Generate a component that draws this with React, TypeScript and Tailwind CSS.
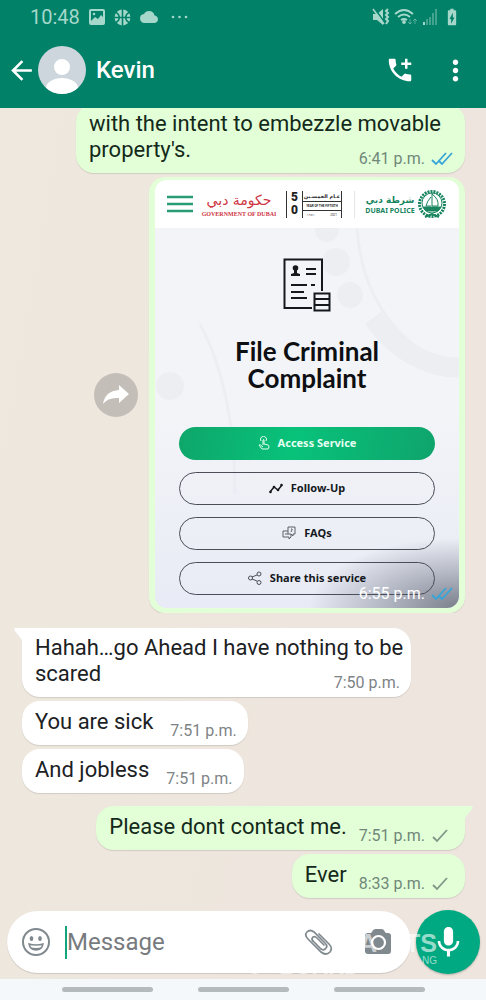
import type { ReactNode } from 'react'
import {
  MdAddIcCall,
  MdArrowBack,
  MdBatteryChargingFull,
  MdCloud,
  MdMic,
  MdMoreVert,
  MdSportsBasketball,
} from 'react-icons/md'

function StatusBar() {
  return (
    <div className="flex h-[34px] items-center justify-between pr-6 pl-[30px] text-[#a5d8cb]">
      <div className="flex items-center">
        <span className="w-[50px] text-[20px] leading-6">10:48</span>
        <svg className="ml-2 h-[18px] w-[18px]" viewBox="0 0 18 18" fill="none" stroke="currentColor" strokeWidth="2">
          <rect x="2" y="2" width="14" height="14" rx="1" />
          <path d="M3 13l4-4 3 2 3-4 3 3v6H3z" fill="currentColor" stroke="none" />
          <circle cx="6" cy="6" r="1.3" fill="currentColor" stroke="none" />
        </svg>
        <MdSportsBasketball className="ml-[7px]" size={19} />
        <MdCloud className="ml-2" size={18} />
        <svg className="ml-3 h-1 w-[18px]" viewBox="0 0 18 4" fill="currentColor">
          <circle cx="3" cy="2" r="1.3" />
          <circle cx="9.5" cy="2" r="1.3" />
          <circle cx="16" cy="2" r="1.3" />
        </svg>
      </div>
      <div className="flex items-center gap-1">
        <svg className="h-[18px] w-[18px]" viewBox="0 0 18 18" fill="none" stroke="currentColor">
          <path d="M1 6h4l6-5v16l-6-5H1z" fill="currentColor" stroke="none" />
          <path d="M3 1l10 14" stroke="#008168" strokeWidth="1.6" />
          <path d="M1 1l11 15" strokeWidth="1.5" />
          <path d="M16 1l-2 2 2 2-2 2 2 2-2 2 2 2-2 3" strokeWidth="2" />
        </svg>
        <svg className="h-[18px] w-6" viewBox="0 0 24 18" fill="none" stroke="currentColor" strokeWidth="1.8">
          <path d="M1 6q9-8 18 0M4 9q6-5 12 0M7 12q3-2 6 0" />
          <circle cx="10" cy="14" r="1" fill="currentColor" />
          <path d="M16 11v5M14 14l2 2 2-2M21 16v-5M19 13l2-2 2 2" strokeWidth="1" opacity=".5" />
        </svg>
        <svg className="h-[18px] w-4" viewBox="0 0 16 18" fill="none" stroke="currentColor" strokeWidth="2">
          <path d="M2 17v-3" />
          <path d="M5 17v-6M8 17V9M11 17V5M14 17V1" opacity=".4" />
        </svg>
        <MdBatteryChargingFull size={20} />
      </div>
    </div>
  )
}

function Header() {
  return (
    <header className="bg-[#008168]">
      <StatusBar />
      <div className="flex h-[74px] items-center pr-3.5 pb-0.5 pl-1.5 text-white">
        <button aria-label="Back">
          <MdArrowBack size={31} />
        </button>
        <svg className="ml-px h-12 w-12 rounded-full" viewBox="0 0 48 48">
          <rect width="48" height="48" fill="#cdd6dc" />
          <circle cx="24" cy="21" r="8" fill="#fff" />
          <ellipse cx="24" cy="42" rx="16" ry="10" fill="#fff" />
        </svg>
        <h1 className="ml-2.5 grow text-[24px] leading-8 font-medium">Kevin</h1>
        <button aria-label="Add call">
          <MdAddIcCall size={30} />
        </button>
        <button className="ml-6" aria-label="More options">
          <MdMoreVert size={33} />
        </button>
      </div>
    </header>
  )
}

function Ticks({ double = false }: { double?: boolean }) {
  return (
    <svg className="ml-1.5 h-4 w-[22px]" viewBox="0 0 22 16" fill="none" strokeWidth="1.8" stroke={double ? '#38a5d8' : '#819687'}>
      {double ? <path d="M1 9l4 4L15 2M8 10l3 3L21 2" /> : <path d="M2 9l4 4L16 2" />}
    </svg>
  )
}

type BubbleProps = {
  text: string
  time: string
  sent?: boolean
  read?: boolean
  tail?: boolean
  long?: boolean
}

function Bubble({ text, time, sent = false, read = false, tail = false, long = false }: BubbleProps) {
  return (
    <div
      className={`relative rounded-[18px] pb-1 pl-[13px] text-[22px] leading-[26px] shadow-[0_1px_1px_rgba(0,0,0,0.12)] ${
        long ? 'flow-root w-[389px] max-w-full pt-[7px]' : 'flex items-end pt-2'
      } ${sent ? 'self-end bg-[#e2ffd7] text-[#14291a]' : 'self-start bg-white text-[#1c2124]'}`}
    >
      {tail && (
        <svg
          className={`absolute top-0 h-5 w-7 ${sent ? '-right-2' : '-left-2 -scale-x-100'}`}
          viewBox="0 0 28 20"
          fill={sent ? '#e2ffd7' : '#fff'}
        >
          <path d="M0 0h26q3 0 1 3l-7 9v8H0z" />
        </svg>
      )}
      <span className={`relative ${long ? '' : 'pb-1.5'}`}>{text}</span>
      <span
        className={`relative flex items-center text-[16px] leading-5 whitespace-nowrap ${
          sent ? 'mr-3 text-[#71877a]' : 'mr-[11px] text-[#7e8386]'
        } ${long ? 'float-right mt-3' : sent ? 'ml-3' : 'ml-[17px]'}`}
      >
        {time}
        {sent && <Ticks double={read} />}
      </span>
    </div>
  )
}

function LogoBar() {
  return (
    <div className="flex h-12 items-center bg-white px-3">
      <svg className="h-[18px] w-[26px] shrink-0" viewBox="0 0 26 18" stroke="#2a9d78" strokeWidth="2.5">
        <path d="M0 2h26M0 9h26M0 16h26" />
      </svg>
      <div className="ml-3 flex w-[68px] shrink-0 flex-col items-center text-[#ce3341]">
        <span className="font-['DejaVu_Sans',sans-serif] text-[14px] leading-5 whitespace-nowrap" lang="ar" dir="rtl">
          حكومة دبي
        </span>
        <span className="font-['Liberation_Serif',serif] text-[6px] leading-2 font-bold whitespace-nowrap">GOVERNMENT OF DUBAI</span>
      </div>
      <div className="ml-[13px] flex h-[27px] w-14 shrink-0 border-x border-[#333] text-[#222]">
        <span className="flex w-4 shrink-0 flex-col items-center border-r border-[#333] text-[12px] leading-[13px] font-black">
          <span>5</span>
          <span>0</span>
        </span>
        <span className="flex min-w-0 grow flex-col text-center">
          <span className="border-b border-[#333] font-['DejaVu_Sans',sans-serif] text-[5px] leading-[10px] font-bold whitespace-nowrap" lang="ar">
            عـام الخمسـين
          </span>
          <span className="border-b border-[#333] text-[3px] leading-2 font-bold whitespace-nowrap">YEAR OF THE FIFTIETH</span>
          <span className="flex justify-between px-1 text-[3px] leading-2">
            <span>١٩٧١</span>
            <span>2021</span>
          </span>
        </span>
      </div>
      <div className="ml-3 h-[27px] w-px shrink-0 bg-[#e4e6e8]" />
      <div className="ml-3 flex w-[46px] shrink-0 flex-col items-center text-[#18855f]">
        <span className="font-['DejaVu_Sans',sans-serif] text-[9px] leading-[13px] font-bold whitespace-nowrap" lang="ar" dir="rtl">
          شرطة دبي
        </span>
        <span className="font-['Noto_Sans',sans-serif] text-[7px] leading-2 font-bold whitespace-nowrap">DUBAI POLICE</span>
      </div>
      <svg className="ml-1 h-[30px] w-[30px] shrink-0" viewBox="0 0 30 30" fill="none" stroke="#18855f">
        <circle cx="15" cy="15" r="12.5" strokeWidth="3" strokeDasharray="2 1" />
        <circle cx="15" cy="14" r="10" fill="#fff" strokeWidth="1" />
        <path d="M15 4v13M15 5q7 5 6 12h-6M14 8q-4 4-5 9h5" />
        <path d="M6 18h18l-3 4H9z" fill="#18855f" />
        <path d="M8 28l7-3 7 3" strokeWidth="2" />
      </svg>
    </div>
  )
}

function DocumentIcon() {
  return (
    <svg className="h-[54px] w-12" viewBox="0 0 48 54" fill="none" stroke="#15181c" strokeWidth="2">
      <path d="M29 50H1.5V1.5H39V33" />
      <path d="M8 27h16M28 27h4M8 34h13M8 40h16M23 11h10M23 16h10" />
      <circle cx="12.5" cy="10" r="2.8" fill="#15181c" stroke="none" />
      <path d="M11 11h3v4l3 1v2H8v-2l3-1z" fill="#15181c" stroke="none" />
      <path d="M31.5 35.5h15v17h-15zM31.5 41h15M31.5 47h15" />
    </svg>
  )
}

function ServiceButton({ icon, label, primary = false }: { icon: ReactNode; label: string; primary?: boolean }) {
  return (
    <button
      className={`flex h-[33px] w-full items-center justify-center gap-2 rounded-full pb-px font-['Noto_Sans',sans-serif] text-[11px] font-bold ${
        primary
          ? 'bg-[linear-gradient(100deg,#0ea66a,#08c27a_45%,#0fa46c)] text-[#e4fff2]'
          : 'border border-[#4a4e59] text-[#15181c]'
      }`}
    >
      {icon}
      {label}
    </button>
  )
}

function ComplaintCard() {
  return (
    <div className="w-[304px] overflow-hidden rounded-xl bg-[#f3f4f8]">
      <LogoBar />
      <div className="relative flex flex-col items-center px-6 pt-[30px] pb-[13px]">
        <svg className="absolute inset-0 h-full w-full" viewBox="0 0 304 380" preserveAspectRatio="none" fill="none" stroke="#eceef2">
          <path d="M202 0q7 103 102 144M45 96q35 65 35 170" strokeWidth="3" />
          <path d="M218 90q35 48 86 50" strokeWidth="20" />
          <g fill="#eceef2" stroke="none">
            <circle cx="181" cy="34" r="14" />
            <circle cx="195" cy="67" r="13" />
            <circle cx="172" cy="2" r="12" />
            <circle cx="15" cy="158" r="14" />
          </g>
        </svg>
        <div className="absolute inset-0 bg-[radial-gradient(ellipse_150px_70px_at_100%_100%,#7b7f8b,#b3b7c3_50%,transparent),linear-gradient(transparent_50%,#e8ebf5)]" />
        <div className="relative flex w-full flex-col items-center">
          <DocumentIcon />
          <h2 className="mt-[26px] mb-[35px] text-center font-['Lato',sans-serif] text-[26px] leading-[27px] font-bold text-[#0d0f12]">
            File Criminal
            <br />
            Complaint
          </h2>
          <div className="flex w-full flex-col gap-3">
            <ServiceButton
              primary
              label="Access Service"
              icon={
                <svg className="h-3.5 w-3" viewBox="0 0 12 14" fill="none" stroke="currentColor">
                  <path d="M3 5a3 3 0 1 1 5 0M5 9V4q1-1 1 0v4l4 1q1 0 1 2l-1 2H4L1 9q1-1 4 2" />
                </svg>
              }
            />
            <ServiceButton
              label="Follow-Up"
              icon={
                <svg className="h-3 w-3.5" viewBox="0 0 14 12" fill="none" stroke="currentColor" strokeWidth="1.5">
                  <path d="M1 10l4-5 4 3 4-5" />
                  <g fill="currentColor" stroke="none">
                    <circle cx="1.5" cy="10" r="1.3" />
                    <circle cx="5" cy="5" r="1.3" />
                    <circle cx="9" cy="8" r="1.3" />
                    <circle cx="12.5" cy="3" r="1.3" />
                  </g>
                </svg>
              }
            />
            <ServiceButton
              label="FAQs"
              icon={
                <svg className="h-3.5 w-3.5" viewBox="0 0 14 14" fill="none" stroke="#5c606a">
                  <path d="M6 1h7v7h-2v2L9 8H6zM6 5H1v6h6v2l2-2V8M3 8h3M9 3h1v1l-1 2" />
                </svg>
              }
            />
            <ServiceButton
              label="Share this service"
              icon={
                <svg className="h-3.5 w-3.5" viewBox="0 0 14 14" fill="none" stroke="#4b4f58">
                  <circle cx="2.5" cy="7" r="2" />
                  <circle cx="11" cy="3" r="2" />
                  <circle cx="11" cy="11.5" r="2" />
                  <path d="M4 6l5-2M4 8l5 2" />
                </svg>
              }
            />
          </div>
        </div>
        <p className="absolute right-1.5 bottom-1 flex items-center text-[16px] leading-5 text-white">
          6:55 p.m.
          <Ticks double />
        </p>
      </div>
    </div>
  )
}

function ImageMessage() {
  return (
    <div className="flex items-center gap-[11px] self-end">
      <button className="flex h-11 w-11 items-center justify-center rounded-full bg-[#c3bfb8]" aria-label="Forward">
        <svg className="h-[22px] w-7" viewBox="0 0 28 22" fill="#fff">
          <path d="M17 1l10 9-10 9v-5Q6 13 1 20 3 7 17 6z" />
        </svg>
      </button>
      <div className="rounded-2xl bg-[#e2ffd7] px-1.5 pt-[3px] pb-[5px] shadow-[0_1px_1px_rgba(0,0,0,0.1)]">
        <ComplaintCard />
      </div>
    </div>
  )
}

function Composer() {
  return (
    <div className="mt-3 flex items-center gap-[5px] pr-1.5 pb-1 pl-[7px]">
      <div className="flex h-[62px] min-w-0 grow items-center rounded-full bg-white pr-[18px] pl-3.5 text-[#80898e] shadow-[0_1px_1px_rgba(0,0,0,0.14)]">
        <button aria-label="Emoji">
          <svg className="h-[30px] w-[30px]" viewBox="0 0 30 30" fill="none" stroke="currentColor" strokeWidth="2">
            <circle cx="15" cy="15" r="13" />
            <ellipse cx="10.5" cy="11.5" rx="1.8" ry="2.5" fill="currentColor" stroke="none" />
            <ellipse cx="19" cy="11.5" rx="1.8" ry="2.5" fill="currentColor" stroke="none" />
            <path d="M8 17q7 2 14 0-1 6-7 6t-7-6z" strokeWidth="1.5" />
            <path d="M9 20q6 2 12 0-2 3-6 3t-6-3z" fill="currentColor" stroke="none" />
          </svg>
        </button>
        <span className="ml-3.5 h-[33px] w-0.5 shrink-0 bg-[#12a47c]" />
        <input
          className="min-w-0 grow text-[24px] leading-8 outline-none placeholder:text-[#777b7e]"
          type="text"
          placeholder="Message"
          aria-label="Message"
        />
        <button aria-label="Attach">
          <svg className="h-[30px] w-[30px]" viewBox="0 0 30 30" fill="none" stroke="currentColor" strokeWidth="1.7" strokeLinecap="round">
            <path d="M9 14l8 8q3 2 5-1 2-2-1-5L10 5Q6 2 3 5T4 12l13 13q5 4 9 0 3-4-1-8L15 7" />
            <path d="M9 14q-2-2 0-4 2-1 4 1l7 7" />
          </svg>
        </button>
        <button className="ml-[29px]" aria-label="Camera">
          <svg className="h-[30px] w-[30px]" viewBox="0 0 30 30">
            <path d="M9 5q1-3 4-3h5q3 0 4 3l1 1h2q3 0 3 3v15q0 3-3 3H5q-3 0-3-3V9q0-3 3-3h3z" fill="currentColor" />
            <circle cx="15.5" cy="15.5" r="6.5" fill="none" stroke="#fff" strokeWidth="2.2" />
          </svg>
        </button>
      </div>
      <button className="flex h-16 w-16 shrink-0 items-center justify-center rounded-full bg-[#00a981] text-white shadow-[0_1px_2px_rgba(0,0,0,0.25)]" aria-label="Record">
        <MdMic size={37} />
      </button>
    </div>
  )
}

function Watermark() {
  return (
    <div className="pointer-events-none absolute right-[49px] bottom-0 flex flex-col items-end font-['Liberation_Sans',sans-serif] leading-none text-white/60">
      <span className="flex gap-[28px] text-[25px] leading-6 font-bold">
        <span>A</span>
        <span>TS</span>
      </span>
      <span className="flex items-start">
        <svg className="mr-3 h-5 w-6" viewBox="0 0 24 20" fill="none" stroke="currentColor" strokeWidth="2">
          <circle cx="12" cy="10" r="8" />
          <path d="M1 6q8 10 22 8" />
        </svg>
        <span className="mr-[62px] text-[22px] leading-6 font-bold">BOARD</span>
        <span className="text-[10px] leading-3">NG</span>
      </span>
    </div>
  )
}

export default function App() {
  return (
    <div className="flex min-h-screen flex-col bg-[#ede6de] font-['Roboto',sans-serif]">
      <Header />
      <main className="relative flex grow flex-col bg-[linear-gradient(100deg,#eee8de,#eee5de)]">
        <div className="flex flex-col gap-1 overflow-hidden pr-[21px] pl-[22px]">
          <div className="-mt-1 flex flex-col">
            <Bubble long sent read text="with the intent to embezzle movable property's." time="6:41 p.m." />
          </div>
          <ImageMessage />
        </div>
        <div className="flex flex-col gap-1 pt-[15px] pr-[21px] pl-[22px]">
          <Bubble long tail text="Hahah…go Ahead I have nothing to be scared" time="7:50 p.m." />
          <Bubble text="You are sick" time="7:51 p.m." />
          <Bubble text="And jobless" time="7:51 p.m." />
        </div>
        <div className="flex flex-col gap-1 pt-[13px] pr-[21px] pl-[22px]">
          <Bubble sent tail text="Please dont contact me." time="7:51 p.m." />
          <Bubble sent text="Ever" time="8:33 p.m." />
        </div>
        <Composer />
        <Watermark />
      </main>
      <nav className="flex h-[21px] items-center justify-center gap-[45px] bg-[#f4f8fa]">
        <button className="h-[5px] w-[91px] rounded-full bg-[#b5babc]" aria-label="Recent apps" />
        <button className="h-[5px] w-[91px] rounded-full bg-[#b5babc]" aria-label="Home" />
        <button className="h-[5px] w-[91px] rounded-full bg-[#b5babc]" aria-label="Back navigation" />
      </nav>
    </div>
  )
}
